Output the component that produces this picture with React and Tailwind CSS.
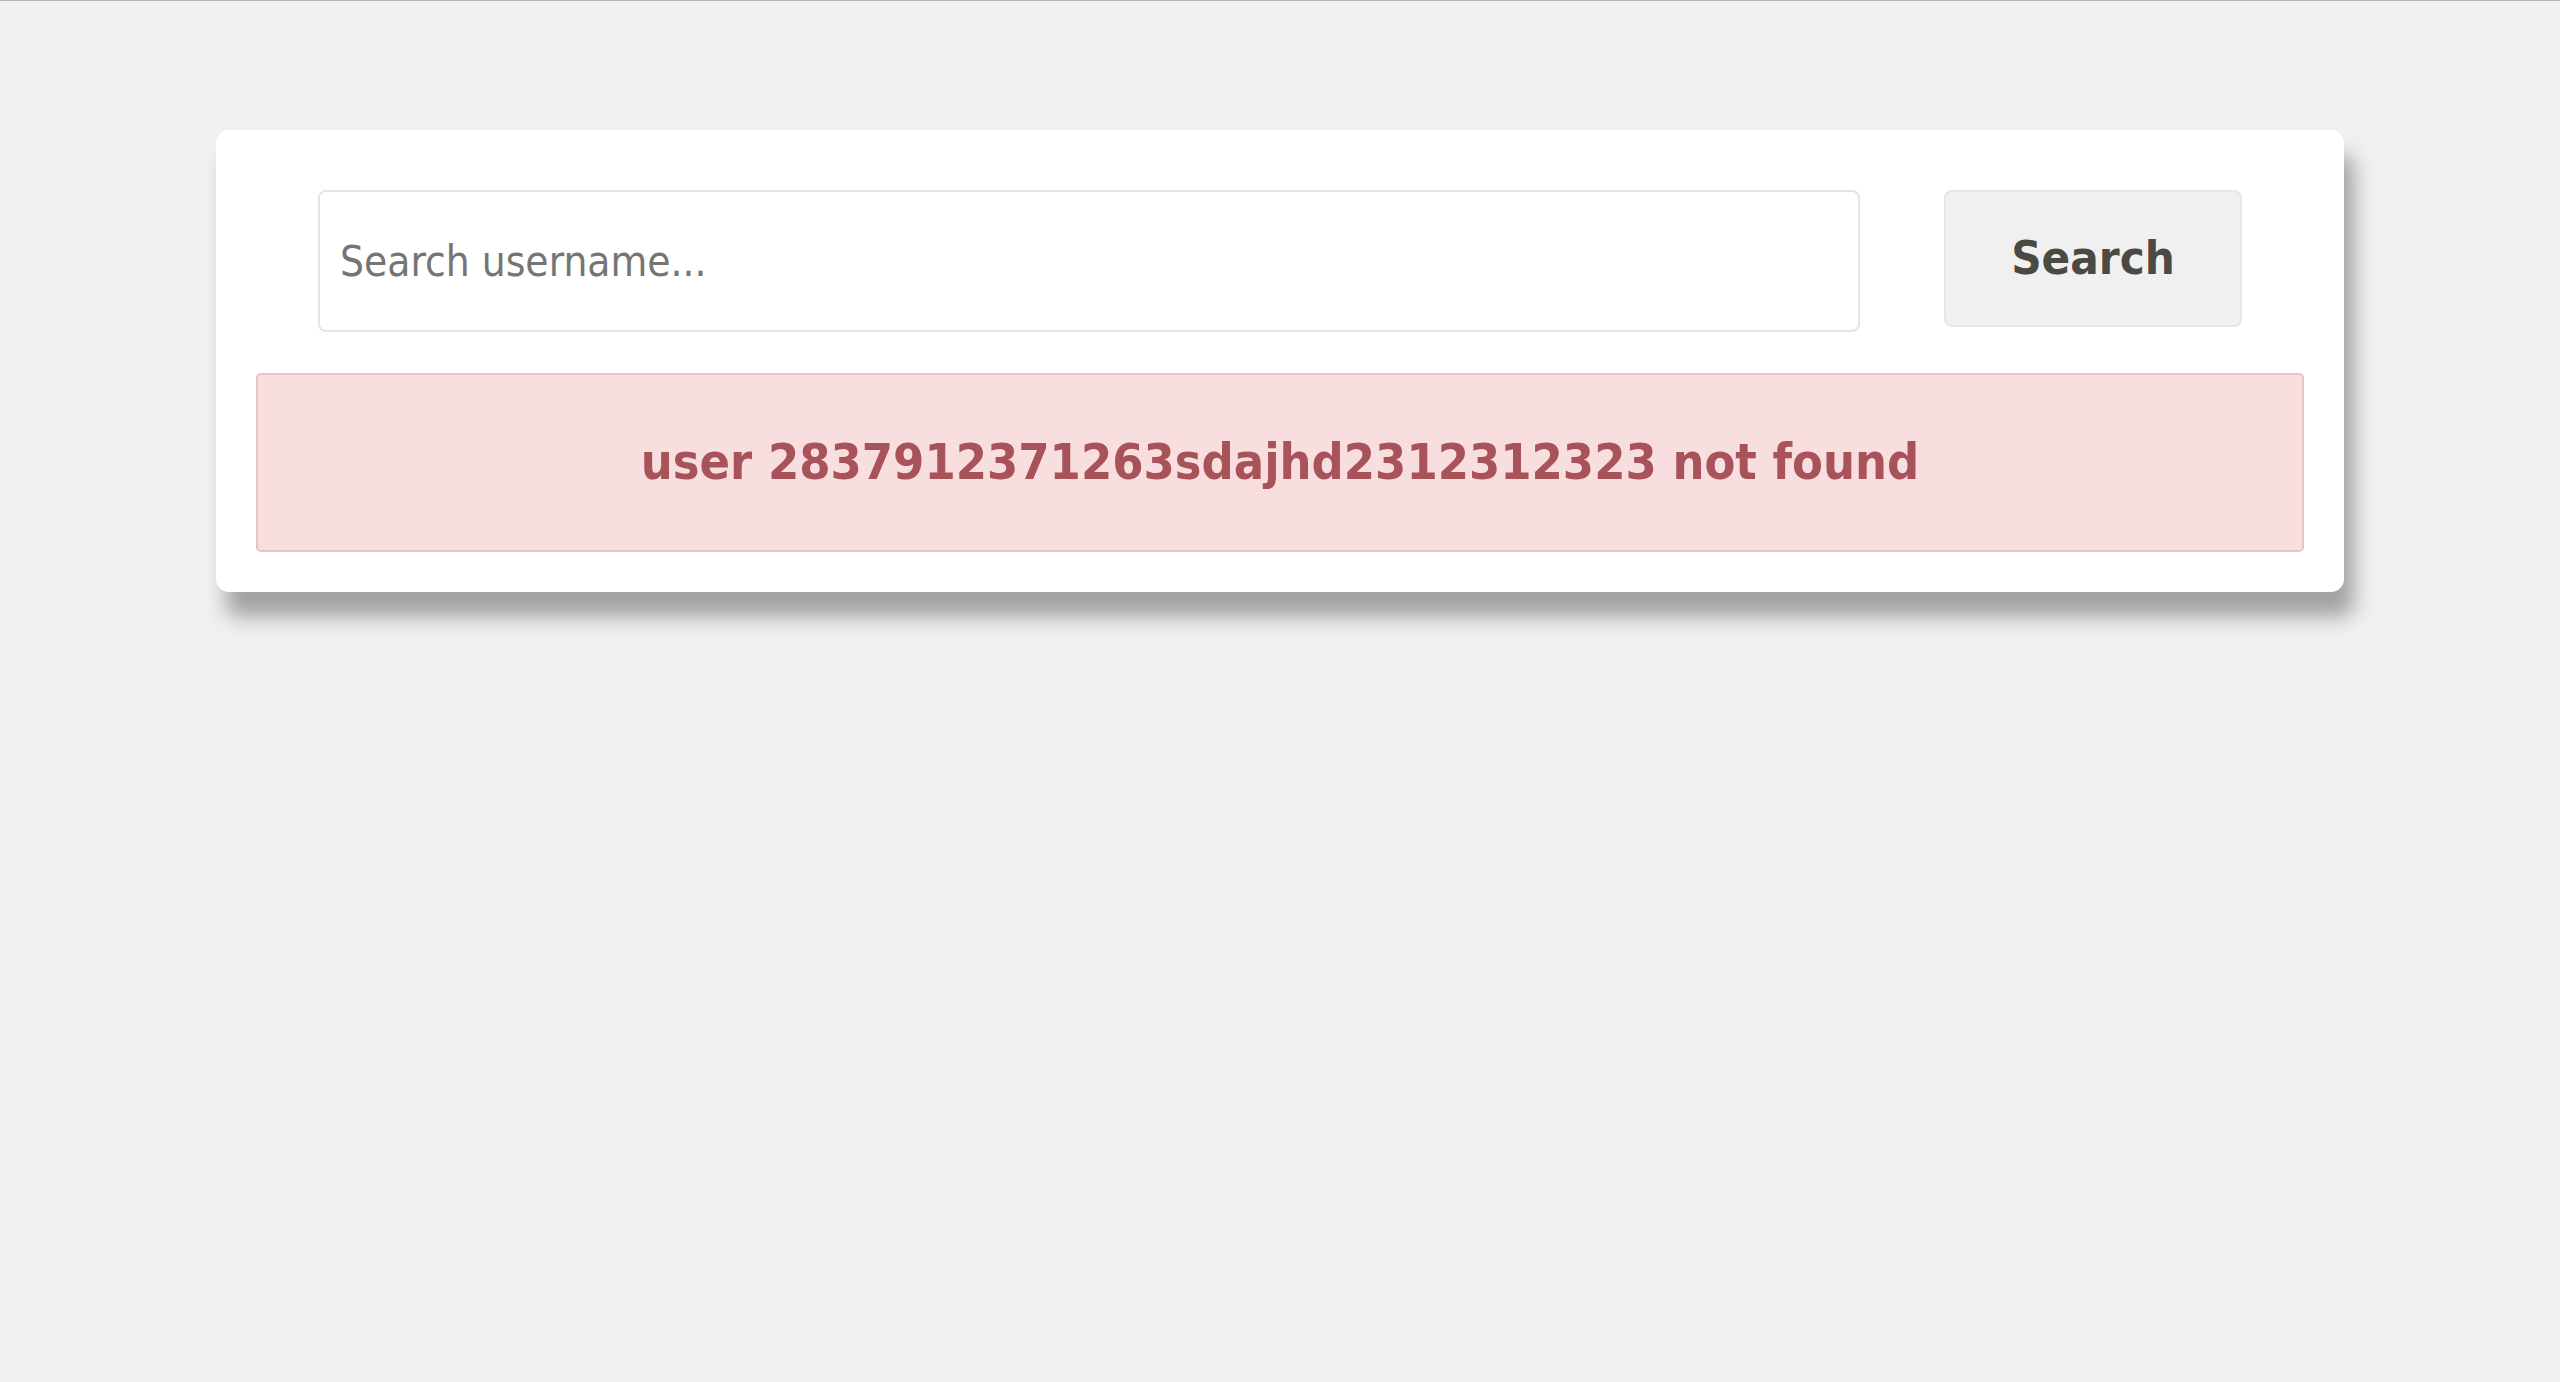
import { useState } from "react";

const FONT = { fontFamily: '"DejaVu Sans Condensed", "DejaVu Sans", sans-serif' };

export default function App() {
  const [query, setQuery] = useState("");

  return (
    <div
      className="h-screen overflow-hidden border-t border-[#b4b4b4] bg-[#f0f0f0] pt-[129px]"
      style={FONT}
    >
      <div className="mx-auto w-[2128px] rounded-[13px] bg-white p-[40px] shadow-[10px_25px_20px_rgba(0,0,0,0.32)]">
        <form
          className="mt-[20px] flex items-start gap-[84px] px-[62px]"
          onSubmit={(e) => e.preventDefault()}
        >
          <input
            type="text"
            value={query}
            onChange={(e) => setQuery(e.target.value)}
            placeholder="Search username..."
            className="h-[142px] flex-1 rounded-[8px] border-2 border-[#e4e4e4] bg-white pl-[20px] text-[42px] text-[#333] outline-none placeholder:text-[#757575]"
          />
          <button
            type="submit"
            className="h-[137px] w-[298px] rounded-[8px] border-2 border-[#e6e6e6] bg-[#f0f0f0] text-[47px] font-bold text-[#4a4a45]"
          >
            Search
          </button>
        </form>

        <div className="mt-[41px] flex h-[179px] items-center justify-center rounded-[5px] border-2 border-[#e6c3c6] bg-[#f9dedf] text-[50px] font-bold text-[#a8525a]">
          user 2837912371263sdajhd2312312323 not found
        </div>
      </div>
    </div>
  );
}
